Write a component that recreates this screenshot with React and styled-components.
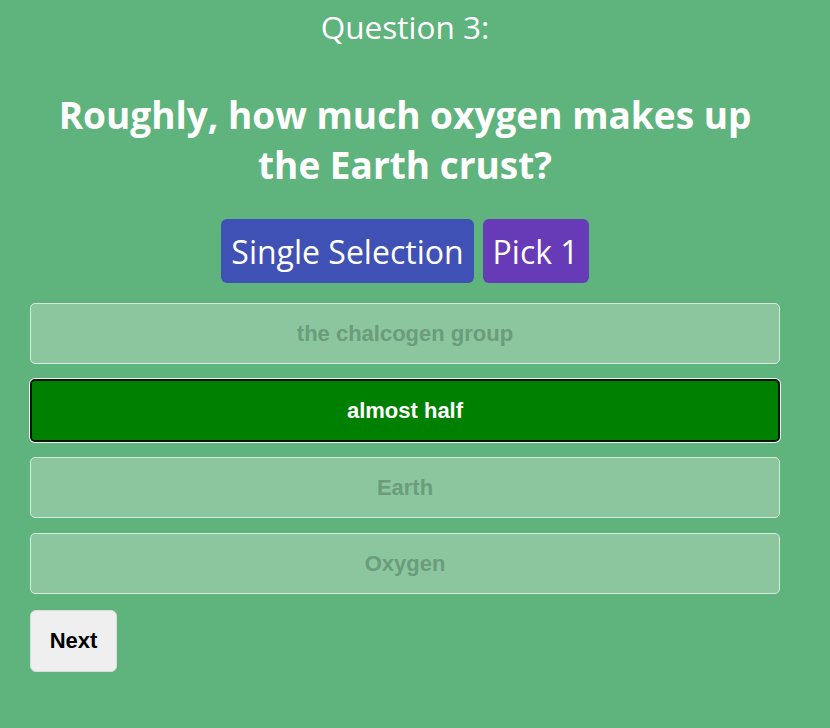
import React, { useState } from 'react';
import styled, { createGlobalStyle } from 'styled-components';

const GlobalStyle = createGlobalStyle`
  html, body {
    margin: 0;
    padding: 0;
    background: #5fb37d;
  }
  body {
    font-family: "Open Sans", "Noto Sans", sans-serif;
  }
`;

const Page = styled.div`
  min-height: 728px;
  background: #5fb37d;
  padding: 0 50px 0 30px;
  box-sizing: border-box;
`;

const Container = styled.div`
  width: 750px;
  display: flex;
  flex-direction: column;
  align-items: center;
`;

const QuestionNumber = styled.div`
  margin-top: 6px;
  font-size: 31.5px;
  line-height: 42px;
  color: #fff;
`;

const QuestionText = styled.h2`
  margin: 42px 0 0;
  padding: 0 10px;
  font-size: 37px;
  line-height: 50px;
  font-weight: 700;
  color: #fff;
  text-align: center;
`;

const Tags = styled.div`
  display: flex;
  gap: 9px;
  margin-top: 29px;
`;

const Tag = styled.span`
  display: inline-flex;
  align-items: center;
  height: 64px;
  padding: 0 10px;
  border-radius: 6px;
  background: ${(p) => p.$color};
  color: #fff;
  font-size: 32px;
`;

const Options = styled.div`
  width: 100%;
  display: flex;
  flex-direction: column;
  gap: 15px;
  margin-top: 20px;
`;

const Option = styled.button`
  width: 100%;
  height: ${(p) => (p.$selected ? '63px' : '61px')};
  border-radius: 5px;
  font-family: "Liberation Sans", Arial, sans-serif;
  font-weight: 700;
  font-size: 22px;
  cursor: pointer;
  background: ${(p) => (p.$selected ? '#008000' : '#8bc69f')};
  color: ${(p) => (p.$selected ? '#fff' : '#6b9c7b')};
  border: ${(p) => (p.$selected ? '2px solid #111' : '1px solid #d7eadd')};
  box-shadow: ${(p) => (p.$selected ? '0 0 0 1px #e8f3ec' : 'none')};
`;

const NextButton = styled.button`
  align-self: flex-start;
  margin-top: 16px;
  width: 87px;
  height: 62px;
  background: #efefef;
  border: 1px solid #dcdcdc;
  border-radius: 6px;
  font-family: "Liberation Sans", Arial, sans-serif;
  font-weight: 700;
  font-size: 22px;
  color: #000;
  cursor: pointer;
`;

const answers = ['the chalcogen group', 'almost half', 'Earth', 'Oxygen'];

export default function App() {
  const [selected, setSelected] = useState(1);

  return (
    <>
      <GlobalStyle />
      <Page>
        <Container>
          <QuestionNumber>Question 3:</QuestionNumber>
          <QuestionText>Roughly, how much oxygen makes up the Earth crust?</QuestionText>
          <Tags>
            <Tag $color="#3f51b5">Single Selection</Tag>
            <Tag $color="#673ab7">Pick 1</Tag>
          </Tags>
          <Options>
            {answers.map((a, i) => (
              <Option key={a} $selected={i === selected} onClick={() => setSelected(i)}>
                {a}
              </Option>
            ))}
          </Options>
          <NextButton>Next</NextButton>
        </Container>
      </Page>
    </>
  );
}
